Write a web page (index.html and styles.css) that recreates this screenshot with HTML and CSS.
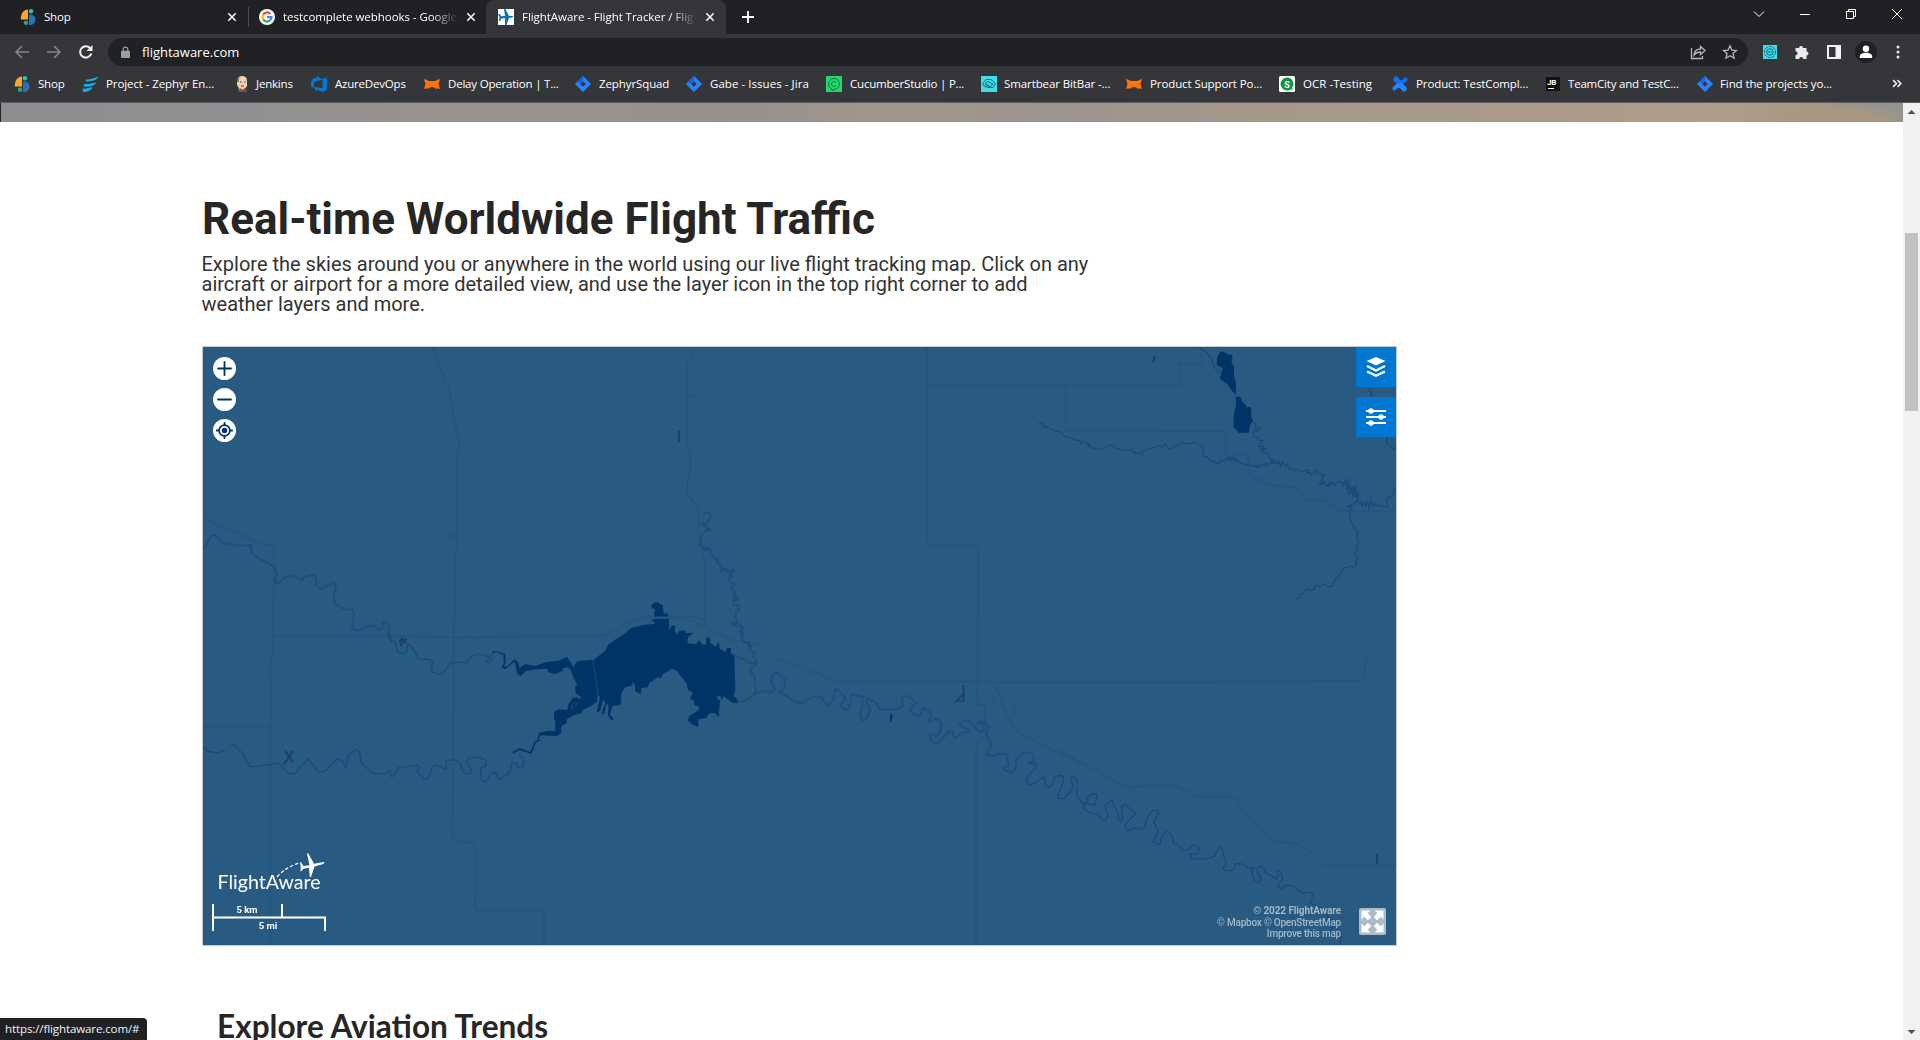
FILE: index.html
```html
<!DOCTYPE html>
<html lang="en">
<head>
<meta charset="utf-8">
<title>FlightAware - Flight Tracker</title>
<link rel="stylesheet" href="styles.css">
</head>
<body>
<svg class="defs" width="0" height="0" aria-hidden="true">
  <symbol id="i-shop" viewBox="0 0 16 16"><path d="M8 .5v10H.8C.8 4.500 3 1 8 .5z" fill="#f9a72b"/><circle cx="11" cy="2.300" r="2.200" fill="#2ec4a5"/><path d="M9 5.500c4.500 0 6.500 2 6.500 5.200S13.500 16 9 16z" fill="#2a6fbb"/><circle cx="6" cy="13.700" r="2.200" fill="#2ba77e"/></symbol>
  <symbol id="i-jira" viewBox="0 0 16 16"><path d="M8 0l8 8-8 8-8-8z" fill="#2684ff"/><path d="M8 5.200L10.800 8 8 10.800 5.200 8z" fill="#35363a"/><path d="M8 0v5L5 8 2.500 5.500z" fill="#1763da"/></symbol>
  <symbol id="i-fox" viewBox="0 0 16 16"><path d="M0 3l3 1q1 1 2.500 1h5Q12 5 13 4l3-1-1.500 5L16 13h-4.500q-.5-2-3.500-2t-3.500 2H0l1.500-5z" fill="#ff730f"/><path d="M0 13l2-1h2.500v1zM16 13l-2-1h-2.500v1z" fill="#a3521c"/></symbol>
  <symbol id="i-x" viewBox="0 0 10 10"><path d="M1.300 1.300l7.400 7.400M8.700 1.300L1.300 8.700" stroke="#fff" stroke-width="1.500"/></symbol>
</svg>

<header class="chrome">
  <div class="tabs">
    <div class="tab tab-first"><svg class="fav"><use href="#i-shop"/></svg><span class="tab-title">Shop</span><svg class="tab-x"><use href="#i-x"/></svg></div>
    <div class="tab tab-second"><svg class="fav" viewBox="0 0 16 16"><circle cx="8" cy="8" r="8" fill="#fff"/><g fill="none" stroke-width="2.200"><path d="M4.200 5.600A4.500 4.500 0 0 1 11.300 4.900" stroke="#ea4335"/><path d="M4.200 5.600a4.500 4.500 0 0 0 0 4.800" stroke="#fbbc05"/><path d="M4.200 10.400a4.500 4.500 0 0 0 6.900.9" stroke="#34a853"/><path d="M11.100 11.300A4.500 4.500 0 0 0 12.500 8.200H8" stroke="#4285f4"/></g></svg><span class="tab-title fade">testcomplete webhooks - Google</span><svg class="tab-x"><use href="#i-x"/></svg></div>
    <div class="tab tab-active"><svg class="fav" viewBox="0 0 16 16"><path fill="#fff" d="M0 0h16v16H0z"/><path d="M0 5h1.500l2 2.300 3.500-.3L6 0h1.500l3.300 6.700 3.700.2q1.500.8 0 1.500l-3.500.6L8.500 16H7V9.300L3.500 9.500 2 12H.8L1.500 8z" fill="#0a72b5"/></svg><span class="tab-title fade">FlightAware - Flight Tracker / Flig</span><svg class="tab-x"><use href="#i-x"/></svg></div>
    <svg class="plus" viewBox="0 0 14 14"><path d="M7 1v12M1 7h12" stroke="#fff" stroke-width="1.800"/></svg>
    <div class="window-controls">
      <svg viewBox="0 0 12 12"><path d="M1 3.500l5 5 5-5"/></svg>
      <svg viewBox="0 0 12 12"><path d="M1 6.500h10"/></svg>
      <svg viewBox="0 0 12 12"><path d="M1.500 3.500h7v7h-7zM3.500 3.500v-2h7v7h-2"/></svg>
      <svg viewBox="0 0 12 12"><path d="M1 1l10 10M11 1L1 11"/></svg>
    </div>
  </div>
  <div class="toolbar">
    <div class="nav">
      <svg viewBox="0 0 16 16" class="dim"><path d="M15 8H2M8 2L2 8l6 6"/></svg>
      <svg viewBox="0 0 16 16" class="dim"><path d="M1 8h13M8 2l6 6-6 6"/></svg>
      <svg viewBox="0 0 16 16" class="lit"><path d="M13.300 9.500A5.700 5.700 0 1 1 12.500 4.600"/><path d="M14.500 1v6h-6z" class="solid"/></svg>
    </div>
    <div class="omnibox">
      <svg class="lock" viewBox="0 0 10 14"><path d="M1 5h8q1 0 1 1v6q0 1-1 1H1q-1 0-1-1V6q0-1 1-1z" fill="#9aa0a6"/><path d="M2.500 6V3.500a2.500 2.500 0 0 1 5 0V6" fill="none" stroke="#9aa0a6" stroke-width="1.300"/></svg>
      <span class="url">flightaware.com</span>
      <svg class="omni-icon" viewBox="0 0 16 16"><path d="M1.500 4v10.500h11V12M4 11c.5-4 3-6 6.500-6V2.500L15 6.500l-4.500 4V8C8 8 5.500 9 4 11z"/></svg>
      <svg class="omni-icon" viewBox="0 0 16 16"><path d="M8 1.800l1.900 4.300 4.600.4-3.500 3.100 1.100 4.600L8 11.800l-4.100 2.400L5 9.600 1.500 6.500l4.600-.4z"/></svg>
    </div>
    <div class="actions">
      <svg viewBox="0 0 16 16"><path fill="#41dbe8" d="M1 1h14v14H1z"/><g fill="none" stroke="#126b7c"><circle cx="8" cy="8" r="5.500" stroke-dasharray="3 1"/><circle cx="8" cy="8" r="3.200"/><path d="M6 8h4"/></g></svg>
      <svg viewBox="0 0 16 16"><path fill="#e8eaed" d="M1.500 4H5a2 2 0 1 1 4 0h3.500v3.500a2 2 0 1 1 0 4V15H9.200a2 2 0 0 0-4 0H1.500v-3.700a2 2 0 0 0 0-4z"/></svg>
      <svg viewBox="0 0 16 16"><path fill="#f1f3f4" fill-rule="evenodd" d="M1 1h14v14H1zM3 3v10h6.500V3z"/></svg>
      <svg class="avatar" viewBox="0 0 22 22"><circle cx="11" cy="11" r="11" fill="#202124"/><circle cx="11" cy="7.800" r="3.200" fill="#fff"/><path d="M4.800 17v-1.500c0-5 12.400-5 12.400 0V17z" fill="#fff"/></svg>
      <svg viewBox="0 0 16 16"><g fill="#e8eaed"><circle cx="8" cy="3" r="1.500"/><circle cx="8" cy="8" r="1.500"/><circle cx="8" cy="13" r="1.500"/></g></svg>
    </div>
  </div>
  <nav class="bookmarks">
    <a><svg class="fav"><use href="#i-shop"/></svg><span>Shop</span></a>
    <a><svg class="fav" viewBox="0 0 16 16"><path d="M4 3.500C8 4 12 2 16 .8c-1 4-8 5-12.500 4.500zM2 8c5 .5 8-1 12-1.500-1 4-8 4.500-12.500 4zM.5 12.500C4 13 7 12 10.500 11c-1 3.500-4 5-9.500 5z" fill="#14aee0"/></svg><span class="wide">Project - Zephyr En...</span></a>
    <a><svg class="fav" viewBox="0 0 16 16"><path d="M3 5q0-5 5-5t5 5v5l-3 4H6l-3-5z" fill="#eed2b6"/><path d="M3 6q-1-5 4-6-3 2-2 6z" fill="#7a6a5c"/><path d="M6 6h1.500M10 6h1.500M7 10h3" stroke="#50382e"/><path d="M3 12l4 2 5-1 1 3H5z" fill="#48637b"/><path d="M6 12l5 3v-3l-5 3z" fill="#d33833"/></svg><span>Jenkins</span></a>
    <a><svg class="fav" viewBox="0 0 16 16"><path fill-rule="evenodd" d="M0 5.500l2-3 4-1V0l5 3 5-1.500v12L12 16l-6-2v2l-3.500-4.500L0 10.500zm3 .3v5.200l8.500 1V3.800z" fill="#0078d7"/></svg><span>AzureDevOps</span></a>
    <a><svg class="fav"><use href="#i-fox"/></svg><span>Delay Operation | T...</span></a>
    <a><svg class="fav"><use href="#i-jira"/></svg><span class="wide">ZephyrSquad</span></a>
    <a><svg class="fav"><use href="#i-jira"/></svg><span class="wider">Gabe - Issues - Jira</span></a>
    <a><svg class="fav" viewBox="0 0 16 16"><path fill="#23d96c" d="M0 0h16v16H0z"/><g fill="none" stroke="#08713b"><path d="M6 14.500V13a5.500 5.500 0 1 1 4 0z"/><path d="M10 6.500a2.500 2.500 0 1 0 0 3"/></g></svg><span>CucumberStudio | P...</span></a>
    <a><svg class="fav" viewBox="0 0 16 16"><path fill="#41dbe8" d="M0 0h16v16H0z"/><g fill="none" stroke="#126b7c"><path d="M3 10L1.500 7.500 5 3.500h5l4.500 4-2.500 4H7z"/><path d="M4 8l3-2.500 5 2.500-3 2.500zM4 8l4 3"/></g></svg><span class="wide">Smartbear BitBar -...</span></a>
    <a><svg class="fav"><use href="#i-fox"/></svg><span class="wide">Product Support Po...</span></a>
    <a><svg class="fav" viewBox="0 0 16 16"><rect width="16" height="16" rx="1.500" fill="#fff"/><path d="M8 1.500a6.500 6.500 0 1 0 4 11.700l2 .8-1-2A6.500 6.500 0 0 0 8 1.500z" fill="#119447"/><text x="5.200" y="11.500" class="glyph">S</text></svg><span class="wider">OCR -Testing</span></a>
    <a><svg class="fav" viewBox="0 0 16 16"><path d="M2 1l3-1q3 5 5 4l4-3 2 3q-6 6-9 5T1 4z" fill="#1a6bf0"/><path d="M14 15l-3 1q-3-5-5-4l-4 3-2-3q6-6 9-5t6 5z" fill="#2684ff"/></svg><span class="wide">Product: TestCompl...</span></a>
    <a><svg class="fav" viewBox="0 0 16 16"><path fill="#111" d="M1 1h14v14H1z"/><text x="2" y="9" class="jb">JB</text><path d="M3 12.500h6" stroke="#fff"/></svg><span>TeamCity and TestC...</span></a>
    <a><svg class="fav"><use href="#i-jira"/></svg><span class="wide">Find the projects yo...</span></a>
    <a class="more"><svg viewBox="0 0 10 10"><path d="M1 2l3 3-3 3M5 2l3 3-3 3" fill="none" stroke="#e8eaed" stroke-width="1.500"/></svg></a>
  </nav>
</header>

<div class="viewport">
  <main class="page">
    <div class="hero"></div>
    <section class="traffic">
      <h1>Real-time Worldwide Flight Traffic</h1>
      <p class="intro">Explore the skies around you or anywhere in the world using our live flight tracking map. Click on any<br>aircraft or airport for a more detailed view, and use the layer icon in the top right corner to add<br>weather layers and more.</p>
      <div class="map">
        <svg class="terrain" viewBox="203 347 1193 598">
          <!-- roads -->
          <g class="road">
            <g transform="translate(195 340) scale(.3333)"><path d="M717 20v20l46 110 14 85 16 75-8 50v255l-5 40-2 240M25 515l25 32 60 22 85 42 42 6v110l-4 160h270l270 5 440-4 25-5 75-43 45-10h130l50 10M1495 30l-18 45v235l9 35v45l-9 40v35l25 28M1478 169h22"/></g>
            <g transform="translate(195 600) scale(.3954 .3333)"><path d="M198 100v50l-9 50 4 60-2 120v655M20 379h171M655 80l-3 625q0 20 25 20 35 0 35 40l-4 150q0 17 14 17h160v103"/></g>
            <g transform="translate(640 480) scale(.3333)"><path d="M143 0v45l32 38v90l20 70v190M862-400v580q0 17 18 17h110q25 0 25 25l-3 452h25v90l-28 30v600M80 411l75 11 125 60 75 9 55 47 190 67h440q20 0 25 15l50 115q6 15 25 25l200 99"/></g>
            <g transform="translate(940 660) scale(.3333)"><path d="M360 273l170 93q20 16 40 16l70-6h68l62 31 16 3h80q20 0 34 25l12 23 90 85 75 9 25 17 51 47h216M160 67h500l600-5q14-2 14-15l1-40 6-20"/></g>
            <g transform="translate(1000 340) scale(.3333)"><path d="M-219 136h757V70h67V20M197 138v132l480 4v69h68v62l65 28 80 11 30 35 60 4 40 31h170"/></g>
          </g>
          <!-- rivers -->
          <g class="river">
            <g transform="translate(195 340) scale(.3333)"><path d="M22 627l13-13 12-26 15-3 17 23 55 9 35-2-1 14 11 18 16 11 26 11 19 15 6 16-9 23 6 7 9-1 24-21 16-1 32 12 0-8 33-6 5 9 2 19 7 11 12 1 32-18 6 6 1 11-7 27 6 22 30 16 22-1 5 14-7 36 5 11 13 3 25-13 20-2 20 14 8-9v-14l12-2 10 11v29l7 22"/></g>
            <g transform="translate(195 600) scale(.3954 .3333)"><path d="M487 95L492 117 506 127 513 158 526 161 536 155 538 133 545 135 555 154 565 177 596 179 601 188 598 215 619 223 628 218 648 188 676 186 681 193 689 187 695 173 711 162 738 167 745 171 737 185 741 188 751 180 752 156"/><path d="M20 438L32 454 60 459 86 445 90 436 102 436 108 446 120 460 129 482 140 500 158 499 210 489 238 522 254 520 265 501 287 477 312 516 328 514 359 478 372 482 381 502 388 464 404 449 416 455 420 487 449 520 480 521 492 511 496 530 502 528 515 503 562 496 568 502 562 514 580 539 588 537 602 498 612 496 635 508 634 484 655 478 670 489 680 520 695 521 700 511 688 490 690 476 716 471 736 480 737 494 722 505 724 538 734 547 745 528 757 515 772 538 795 518 802 487 813 490 816 503 828 502 832 480 819 462"/></g>
            <g transform="translate(640 480) scale(.3333)"><path d="M190 101L204 97 211 102 209 118 197 132 183 132 196 138 206 148 210 145 212 151 206 153 198 148 194 158 186 160 182 178 184 184 177 192 183 199 190 202 189 208 196 204 200 206 192 213 201 210 203 204 214 214 214 226 226 238 234 234 230 248 240 250 243 264 242 275 250 265 253 272 258 264 266 278 272 274 280 268 281 274 274 282 268 290 276 292 264 300 270 308 283 312 273 322 278 330 283 332 282 346 288 348 296 358 286 362 289 350 280 364 279 374 294 376 298 390 288 392 286 414 292 426 274 430 288 426 286 436 276 434 290 440 300 434 310 448 298 455 313 460 302 466 313 487 324 488 326 498 332 496 328 508 345 517 338 530 350 540 348 556 336 560 330 574 344 590 344 620 348 638M284 528l27 9 10 10 18 2h10"/><path d="M295 665L313 664 347 640 374 632 395 639 403 632 404 624 393 602 395 586 409 575 436 600 433 622 419 638 444 650 468 667 488 669 520 649 544 651 562 677 580 660 583 632 591 627 616 653 614 660 601 674 612 688 622 689 629 681 634 643 671 651 662 700 663 714 670 723 677 718 691 692 678 663 681 655 708 668 719 688 770 688 788 678 788 664 784 652 792 647 808 650 828 668 809 687 820 702 838 709 850 683 870 698 872 707 866 721 868 727 886 717 902 722 905 737 896 764 886 767 867 762 876 786 892 792 929 752 937 754 943 776 967 758 986 755 985 748 959 737 960 729 974 722 988 725 1020 756 1032 754 1030 733 1010 731 1020 724 1033 726 1048 741 1038 762 1055 793 1039 824 1054 828 1075 822 1101 822 1105 858 1092 862 1093 870 1119 880 1130 850 1127 841 1150 819 1171 817 1184 831 1179 843 1166 850 1189 853 1186 866 1160 892"/></g>
            <g transform="translate(940 660) scale(.3333)"><path d="M260 352L260 368 266 374 282 371 312 350 318 378 325 383 333 379 345 352 357 346 370 349 372 362 352 407 357 415 372 416 396 390 398 378 392 352 399 350 412 362 410 406 426 428 464 436 472 407 466 401 452 403 442 414 439 430 430 436 431 446 456 462 476 463 488 481 496 482 504 468 496 443 498 434 516 419 522 432 521 440 533 452 536 480 542 485 547 478 545 440 555 433 587 461 556 494 557 508 569 514 580 504 604 509 616 498 618 478 638 451 653 451 656 460 641 484 655 515 640 542 652 553 663 550 661 540 672 519 684 514 696 526 700 550 711 551 726 570 745 569 760 554 775 560 778 570 771 581 748 584 756 599 772 595 800 597 822 590 838 562 848 567 850 588 860 604 848 625 854 632 880 631 886 611 909 612 927 624 942 621 934 630 940 657 956 669 964 660 961 649 953 642 952 625 963 619 974 626 976 638 1009 656 1015 648 1012 635 1019 631 1027 648 1026 660 1013 673 1022 687 1037 676 1059 677 1087 700 1114 696 1118 708 1110 730 1140 742 1165 752 1160 768 1184 785 1180 802 1168 820 1204 830 1199 855"/></g>
            <g transform="translate(1000 340) scale(.3333)"><path d="M116 247L129 250 131 265 138 257 152 268 164 273 182 276 194 290 214 293 220 299 240 302 246 308 242 313 254 304 266 318 264 308 272 322 300 328 330 315 344 318 346 325 362 328 365 333 394 328 404 342 398 334 414 342 418 336 425 345 427 333 438 331 462 322 480 317 488 323 495 313 510 328 538 313 544 306 556 312 585 307 607 320 609 345 615 352 619 348 632 362 656 371 662 361 675 362 678 354 688 362 682 352 696 362 690 351 706 364 700 350 712 359 708 368 716 363 722 370 752 376 764 380 768 372 772 384 778 376 782 382 782 373 794 379 796 370 806 378 808 370 820 370 822 360 834 372 836 361 842 381 848 363 856 380 862 371 866 386 898 390 900 395 926 389 918 402 930 396 934 406 946 391 950 402 964 399 966 410 976 402 964 420 972 428 956 430 964 434 974 426 980 439 992 425 984 438 990 436 1000 428 1006 436 1012 424 1022 428 1034 432 1038 417 1028 440 1044 420 1040 440 1052 432 1038 448 1060 440 1042 458 1066 442 1046 464 1066 452 1068 436 1058 470 1070 454 1066 472 1076 462 1072 484 1060 492 1042 500 1054 500 1056 508 1049 510 1052 540 1060 556 1064 570 1074 575 1070 595 1076 605 1070 620 1074 630 1064 636 1066 645 1076 655 1066 664 1069 676 1058 682 1050 678 1044 684 1032 682 1026 696 1018 702 1016 712 1006 716 998 738 986 740 976 736 970 730 962 740 948 736 942 742 944 748 930 752 918 746 914 756 900 766 898 774 888 775M1072 484l8 8 4-8 3 16 5-14 6 14 5-18 5 24 6-26 6 20 5-10 5 8 10-3 5 5 18-1-2-22 22-16-2-12 8-2"/><path d="M757 243L768 254 764 260 779 265 772 274 764 270 760 292 776 294 778 302 788 300 776 320 792 318 782 330 798 324 784 336 802 338 808 356 818 358 812 366 826 370"/></g>
            <path d="M1199 347l8 6 5 6 2 8 5 5 3 1M1369 388l4 11M1387 437v7l9 6"/>
          </g>
          <!-- airport grounds -->
          <g class="grounds"><path d="M447 533h9v8l-4-2h-5zM595 611h7v3h-7zM992 695h4v9h-4zM1011 705h7l-4 10h-3zM245 727h4v5h-4zM222 749l8-2 5 8-5-2z"/></g>
          <g class="runway"><path d="M679 431v11M1155 356l-2 7M1377 854v10M285 751l8 11m0-11l-9 13M399 641l8-2m-6-1l5 5m-3-4l-2 7"/><path d="M963.500 685v16h-7l7-7" stroke-width="1.700"/></g>
          <!-- reservoirs -->
          <g class="lake" transform="translate(480 590) scale(.3333)">
            <path d="M515 44L524 38 534 37 548 46 552 71 565 71 564 79 524 80 522 70 526 58 515 54z"/>
            <path d="M527 86H567V122L576 106 586 108 584 124 592 134 598 122 618 122 616 130 640 128 624 142 622 160 650 162 656 150 668 164 678 164 680 142 690 144 692 160 708 170 716 156 720 176 736 186 742 174 753 174 752 190 763 196 766 302 760 314 774 332 772 340 758 338 730 318 726 332 722 318 708 320 720 332 716 382 704 368 684 372 680 384 655 388 655 410 638 404 624 392 628 378 656 360 658 350 644 346 640 330 630 328 638 308 624 300 620 280 600 256 588 240 576 237 548 252 542 266 536 260 508 278 504 292 484 294 482 312 466 304 464 282 456 276 458 286 436 292 424 310 422 345 398 348 390 374 402 388 394 392 384 376 386 346 378 342 374 370 366 374 368 358 376 340 370 326 360 364 350 368 360 320 354 316 350 338 344 340 340 344 308 360 304 370 284 374 260 388 260 400 244 408 244 430 230 438 180 436 176 450 172 448 178 428 206 422 226 424 226 392 222 388 222 366 236 358 262 360 264 344 278 324 290 322 300 328 304 322 286 308 286 290 292 286 280 262 272 240 264 232 250 234 246 244 224 252 204 246 202 236 170 238 136 244 122 258 112 252 104 214 76 238 64 232 72 220 70 194 46 186 40 190 36 184 44 182 76 192 76 220 72 228 80 230 104 208 114 216 118 234 136 222 166 228 200 216 238 212 260 200 270 214 280 232 292 214 330 210 340 210 376 182 384 164 436 130 454 114 494 104 524 102 524 96 512 92z"/>
            <path d="M276 344l8-6 8 2-8 12-10 4zM338 210l12 70 4 38" class="gap"/>
          </g>
          <g class="creek"><path d="M540 740l-5 2-4 11-12-4-6 4"/></g>
          <g class="lake">
            <g transform="translate(1000 340) scale(.3333)"><path d="M663 34L677 38 686 46 694 42 698 52 694 68 702 78 702 110 708 126 708 164 696 152 682 132 660 116 668 84 650 76 652 50z"/>
            <path d="M708 170H722L726 184 738 196 742 210 743 200 753 202 754 230 758 242 750 256 746 278H716L700 260 702 222 708 196z"/></g>
            <path d="M890 714l3 1-2 7h-1z"/>
          </g>
        </svg>

        <div class="map-zoom">
          <svg viewBox="0 0 23 23"><circle cx="11.500" cy="11.500" r="11.500" fill="#fff"/><path d="M11.500 5v13M5 11.500h13"/></svg>
          <svg viewBox="0 0 23 23"><circle cx="11.500" cy="11.500" r="11.500" fill="#fff"/><path d="M5 11.500h13"/></svg>
          <svg viewBox="0 0 23 23"><circle cx="11.500" cy="11.500" r="11.500" fill="#fff"/><circle cx="11.500" cy="11.500" r="5.400" class="ring"/><circle cx="11.500" cy="11.500" r="2.700" fill="#036"/><path d="M11.500 3.800v2.500M11.500 16.700v2.500M3.800 11.500h2.500M16.700 11.500h2.500"/></svg>
        </div>
        <div class="map-tools">
          <button><svg viewBox="0 0 20 20"><path d="M10 0l9.500 4L10 8.500.5 4z" fill="#fff"/><path d="M1 9l9 4.500L19 9M1 14.500l9 4.300 9-4.300" fill="none" stroke="#fff" stroke-width="2.200"/></svg></button>
          <button><svg viewBox="0 0 20 20"><path d="M0 4h20M0 10h20M0 16h20" stroke="#fff" stroke-width="1.800"/><g fill="#fff"><circle cx="5" cy="4" r="2.700"/><circle cx="15" cy="10" r="2.700"/><circle cx="5" cy="16" r="2.700"/></g></svg></button>
        </div>
        <svg class="brand" viewBox="0 0 120 80">
          <text x="5.500" y="34.500" textLength="103" lengthAdjust="spacingAndGlyphs" class="brand-name">FlightAware</text>
          <path d="M65 23q10-11 23-14" fill="none" stroke="#fff" stroke-width="1.300" stroke-dasharray="3.500 2"/>
          <path d="M88 4.500h1l2.500 4 6-1L95-5h1.200L102 6l9.500-1.700q2 .8-.3 2L102.500 9 99 20h-1.200L97 10.300l-5.500.9L89.300 14h-.9l.4-4z" transform="translate(0 4) scale(1 .95)" fill="#fff"/>
          <path d="M1 50v27M0 63.500h114M70 50v13M113 63v14" fill="none" stroke="#fff" stroke-width="2"/>
          <text x="35" y="59" class="scale-label">5 km</text><text x="56" y="74.500" class="scale-label">5 mi</text>
        </svg>
        <div class="credits"><b>© 2022 FlightAware</b><span>© Mapbox © OpenStreetMap</span><span>Improve this map</span></div>
        <svg class="expand" viewBox="0 0 27 27"><rect width="27" height="27" rx="2" fill="#a9bccc"/><path id="arrow" d="M2.500 2.500h9L8.700 5.300l3.600 3.600-3.400 3.400-3.600-3.600-2.800 2.800z" fill="#fff"/><use href="#arrow" transform="rotate(90 13.500 13.500)"/><use href="#arrow" transform="rotate(180 13.500 13.500)"/><use href="#arrow" transform="rotate(270 13.500 13.500)"/></svg>
      </div>
    </section>
    <h2>Explore Aviation Trends</h2>
  </main>
  <aside class="scrollbar"><svg viewBox="0 0 17 17"><path d="M4.500 11h8l-4-4z"/></svg><div class="thumb"></div><svg class="down" viewBox="0 0 17 17"><path d="M4.500 7h8l-4 4z"/></svg></aside>
</div>
<div class="status">https://flightaware.com/#</div>
</body>
</html>
```

FILE: styles.css
```css
* { box-sizing: border-box; }
body { margin: 0; width: 1920px; height: 1040px; overflow: hidden; display: flex; flex-direction: column; background: #fff; font-family: Roboto, sans-serif; color: #262626; }
svg { display: block; flex: none; }
.defs { position: absolute; }

/* browser frame */
.chrome { height: 103px; flex: none; background: #35363a; border-bottom: 1px solid #5c5d61; color: #fff; font: 11.5px/16px "Open Sans", sans-serif; letter-spacing: -0.2px; }
.tabs { height: 34px; display: flex; align-items: center; background: #202124; }
.tab { height: 34px; display: flex; align-items: center; gap: 8px; padding-right: 10px; }
.tab-first { width: 249px; padding-left: 20px; padding-right: 11px; border-right: 1px solid #4b4c50; background-clip: padding-box; height: 20px; }
.tab-second { width: 237px; padding-left: 10px; letter-spacing: -0.05px; }
.tab-active { width: 240px; padding-left: 12px; padding-right: 11px; background: #35363a; border-radius: 8px 8px 0 0; letter-spacing: -0.05px; }
.fav { width: 16px; height: 16px; }
.tab-title { flex: 1; min-width: 0; overflow: hidden; white-space: nowrap; }
.fade { -webkit-mask-image: linear-gradient(90deg, #000 85%, transparent); mask-image: linear-gradient(90deg, #000 85%, transparent); }
.tab-x { width: 10px; height: 10px; }
.plus { width: 14px; height: 14px; margin-left: 15px; }
.window-controls { margin-left: auto; display: flex; gap: 34px; padding: 0 17px 6px 0; }
.window-controls svg { width: 12px; height: 12px; fill: none; stroke: #fff; }
.toolbar { height: 36px; display: flex; align-items: center; }
.nav { display: flex; gap: 16px; width: 108px; padding-left: 14px; }
.nav svg { width: 16px; height: 16px; fill: none; stroke-width: 1.6; }
.nav .dim { stroke: #828387; }
.nav .lit { stroke: #f1f3f4; stroke-width: 2; }
.nav .solid { fill: #f1f3f4; stroke: none; }
.omnibox { width: 1640px; height: 28px; border-radius: 14px; background: #202124; display: flex; align-items: center; padding: 0 10px 0 13px; }
.lock { width: 9px; height: 13px; }
.url { margin-left: 12px; margin-right: auto; font-size: 13px; letter-spacing: 0; }
.omni-icon { width: 16px; height: 16px; margin-left: 16px; fill: none; stroke: #b5b7ba; stroke-width: 1.3; }
.actions { display: flex; align-items: center; gap: 16px; padding-left: 14px; }
.actions svg { width: 16px; height: 16px; }
.actions .avatar { width: 22px; height: 22px; margin: 0 -3px; }
.bookmarks { height: 30px; display: flex; align-items: center; padding: 0 0 3px 14px; }
.bookmarks a { display: flex; align-items: center; gap: 8px; white-space: nowrap; flex: none; width: 153px; }
.bookmarks .wide { letter-spacing: -0.1px; }
.bookmarks .wider { letter-spacing: 0.05px; }
.bookmarks a:nth-child(1) { width: 68px; }
.bookmarks a:nth-child(2) { width: 152px; }
.bookmarks a:nth-child(3) { width: 77px; gap: 6px; }
.bookmarks a:nth-child(4) { width: 113px; }
.bookmarks a:nth-child(5) { width: 151px; }
.bookmarks a:nth-child(6) { width: 111px; }
.bookmarks a:nth-child(7) { width: 140px; }
.bookmarks a:nth-child(8) { width: 155px; }
.bookmarks a:nth-child(9) { width: 145px; gap: 7px; }
.bookmarks a:nth-child(11) { width: 113px; }
.bookmarks a:nth-child(13) { width: 152px; gap: 7px; }
.bookmarks a:nth-child(14) { width: 195px; gap: 7px; }
.bookmarks .more { width: 11px; }
.more svg { width: 11px; height: 11px; }
.glyph { font: bold 9px Roboto, sans-serif; fill: #fff; }
.jb { font: bold 8px Roboto, sans-serif; fill: #fff; }

/* page */
.viewport { flex: 1; min-height: 0; display: flex; }
.page { flex: 1; overflow: hidden; }
.hero { height: 19px; border-left: 1px solid #222; background: radial-gradient(ellipse 75px 26px at 96.5% 120%, #a99780 60%, transparent), linear-gradient(90deg, #8d8e90 0, #929091 14%, #9c938e 28%, #978f8c 38%, #a0968d 46%, #9d948e 56%, #a79989 68%, #a89a8b 76%, #b09d8a 90%, #a99884 95%, #929492 97%); }
.traffic { padding: 67px 0 0 202px; }
h1 { margin: 0; font-size: 44px; line-height: 60px; font-weight: 700; height: 65px; white-space: nowrap; }
.intro { margin: 0 0 0 -0.5px; font-size: 20px; line-height: 20px; color: #333; white-space: nowrap; height: 92px; }
.map { position: relative; width: 1195px; height: 600px; border: 1px solid #c6cacd; background: #285a82; overflow: hidden; }
.terrain { width: 1193px; height: 598px; }
.terrain path { vector-effect: non-scaling-stroke; }
.road { fill: none; stroke: #22527b; stroke-width: 1; opacity: .85; }
.river { fill: none; stroke: #174a7a; stroke-width: 1.2; stroke-linejoin: round; }
.grounds { fill: #2b5678; }
.runway { fill: none; stroke: #1f3e63; stroke-width: 2; }
.lake { fill: #036; }
.lake .gap { fill: none; stroke: #1b4d79; stroke-width: 1; }
.creek { fill: none; stroke: #036; stroke-width: 1.6; }
.map-zoom { position: absolute; left: 10px; top: 10px; display: grid; gap: 8px; }
.map-zoom svg { width: 23px; height: 23px; }
.map-zoom path { stroke: #036; stroke-width: 1.8; stroke-linecap: round; }
.ring { fill: none; stroke: #036; stroke-width: 1.6; }
.map-tools { position: absolute; right: 0; top: 0; display: grid; gap: 10px; }
.map-tools button { width: 40px; height: 40px; border: 0; padding: 10px; background: #0077d1; }
.map-tools svg { width: 20px; height: 20px; }
.brand { position: absolute; left: 9px; top: 507px; width: 120px; height: 80px; overflow: visible; }
.brand-name { font: 18.5px Lato, sans-serif; fill: #fff; }
.scale-label { font: bold 9.5px Roboto, sans-serif; fill: #fff; text-anchor: middle; }
.credits { position: absolute; right: 55px; top: 558px; display: grid; justify-items: end; font-size: 10px; line-height: 11.5px; font-weight: 500; color: #a2b7c7; white-space: nowrap; letter-spacing: -0.22px; }
.credits b { letter-spacing: -0.1px; }
.expand { position: absolute; left: 1156px; top: 561px; width: 27px; height: 27px; }
h2 { margin: 58px 0 0 217px; font: 700 31.6px/44px Lato, sans-serif; white-space: nowrap; }
.scrollbar { width: 17px; background: #f1f1f1; display: flex; flex-direction: column; align-items: center; }
.scrollbar svg { width: 17px; height: 17px; fill: #505050; }
.scrollbar .down { margin-top: auto; }
.thumb { width: 13px; height: 178px; margin-top: 113px; background: #c1c1c1; }
.status { position: absolute; left: 0; bottom: 0; width: 147px; height: 22px; padding-left: 5px; background: #202124; border-radius: 0 4px 0 0; color: #f1f3f4; font: 11.5px/22px "Open Sans", sans-serif; letter-spacing: -0.1px; }
```
